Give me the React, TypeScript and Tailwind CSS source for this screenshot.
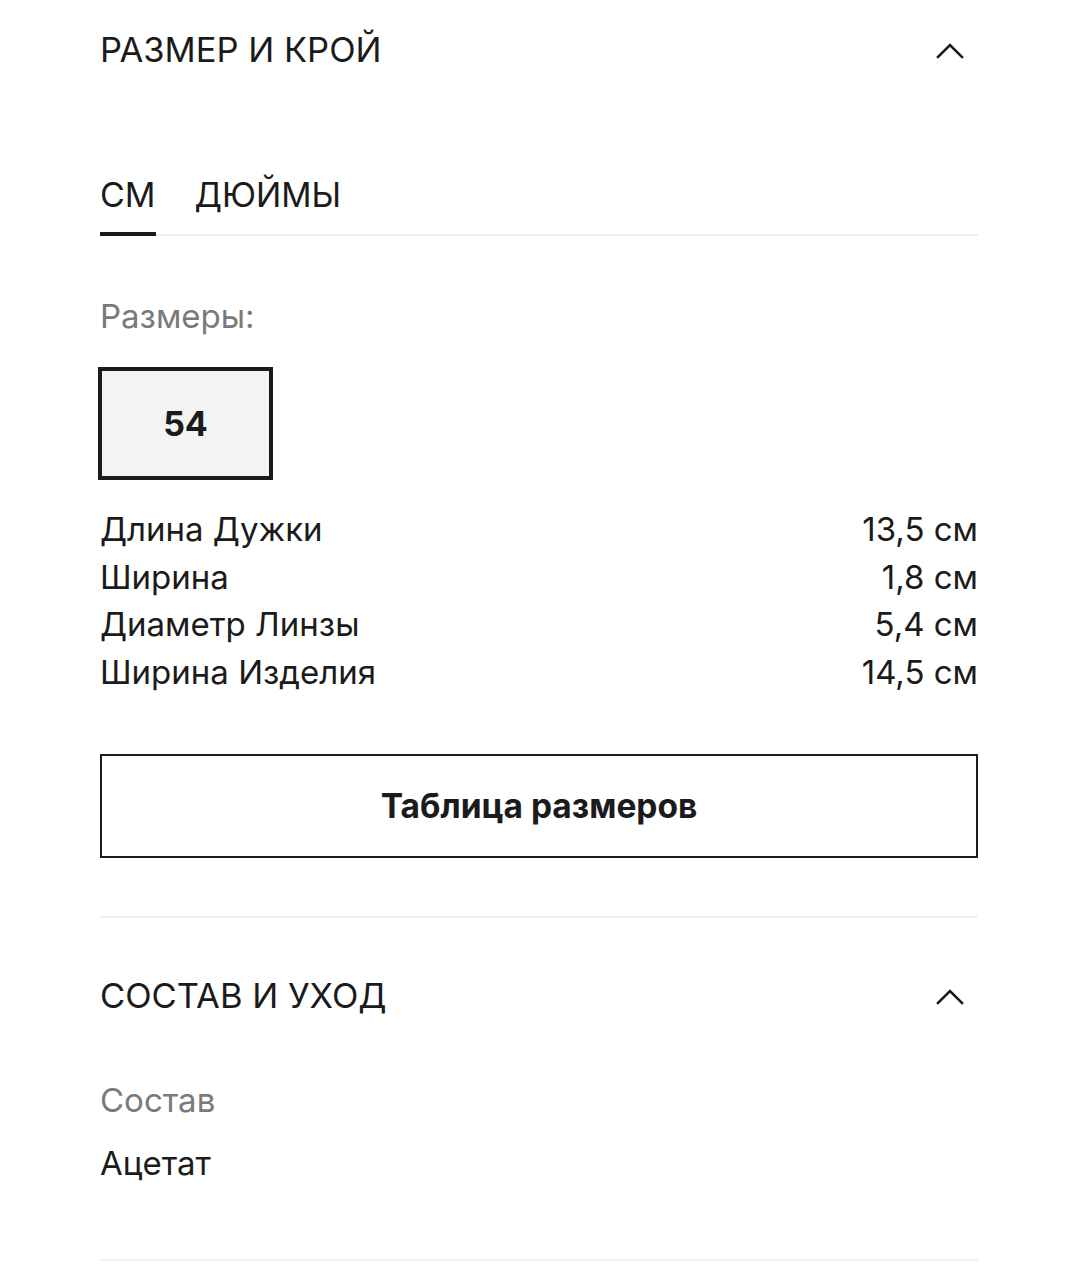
import React from "react";

const rows = [
  ["Длина Дужки", "13,5 см"],
  ["Ширина", "1,8 см"],
  ["Диаметр Линзы", "5,4 см"],
  ["Ширина Изделия", "14,5 см"],
];

function Chevron() {
  return (
    <svg width="28" height="18" viewBox="0 0 28 18" fill="none" className="mr-[14px]">
      <path d="M2 16 L14 4 L26 16" stroke="#1a1a1a" strokeWidth="2.6" strokeLinecap="square" />
    </svg>
  );
}

export default function App() {
  return (
    <main
      className="min-h-screen bg-white text-[#1b1b1b] pl-[100px] pr-[102px]"
      style={{ fontFamily: 'Inter, "Liberation Sans", Arial, sans-serif' }}
    >
      <section>
        <header className="flex h-[100px] items-center justify-between">
          <h2 className="text-[34.5px] leading-none">РАЗМЕР И КРОЙ</h2>
          <Chevron />
        </header>

        <div className="mt-[78px] flex gap-[39px] border-b-2 border-[#efefef]">
          <button className="-mb-[2px] border-b-4 border-[#1b1b1b] pb-[20px] text-[34px] leading-none">
            СМ
          </button>
          <button className="pb-[20px] text-[33.5px] leading-none">ДЮЙМЫ</button>
        </div>

        <p className="mt-[64px] text-[33px] leading-none text-[#7a7a7a]">Размеры:</p>

        <div className="mt-[34px] -ml-[2px] flex h-[113px] w-[175px] items-center justify-center border-4 border-[#1b1b1b] bg-[#f3f3f3]">
          <span className="text-[34px] font-bold">54</span>
        </div>

        <dl className="mt-[26px] flex flex-col">
          {rows.map(([k, v]) => (
            <div key={k} className="flex h-[47.6px] items-center justify-between text-[33px]">
              <dt>{k}</dt>
              <dd>{v}</dd>
            </div>
          ))}
        </dl>

        <button className="mt-[58px] flex h-[104px] w-full items-center justify-center border-2 border-[#1b1b1b] text-[33.5px] font-bold">
          Таблица размеров
        </button>

        <div className="mt-[58px] border-b-2 border-[#f1f1f1]" />
      </section>

      <section>
        <header className="flex h-[156px] items-center justify-between">
          <h2 className="text-[34.5px] leading-none">СОСТАВ И УХОД</h2>
          <Chevron />
        </header>
        <p className="mt-[10px] text-[33px] leading-none text-[#7a7a7a]">Состав</p>
        <p className="mt-[30px] text-[33px] leading-none">Ацетат</p>
        <div className="mt-[79px] border-b-2 border-[#f1f1f1]" />
      </section>
    </main>
  );
}
